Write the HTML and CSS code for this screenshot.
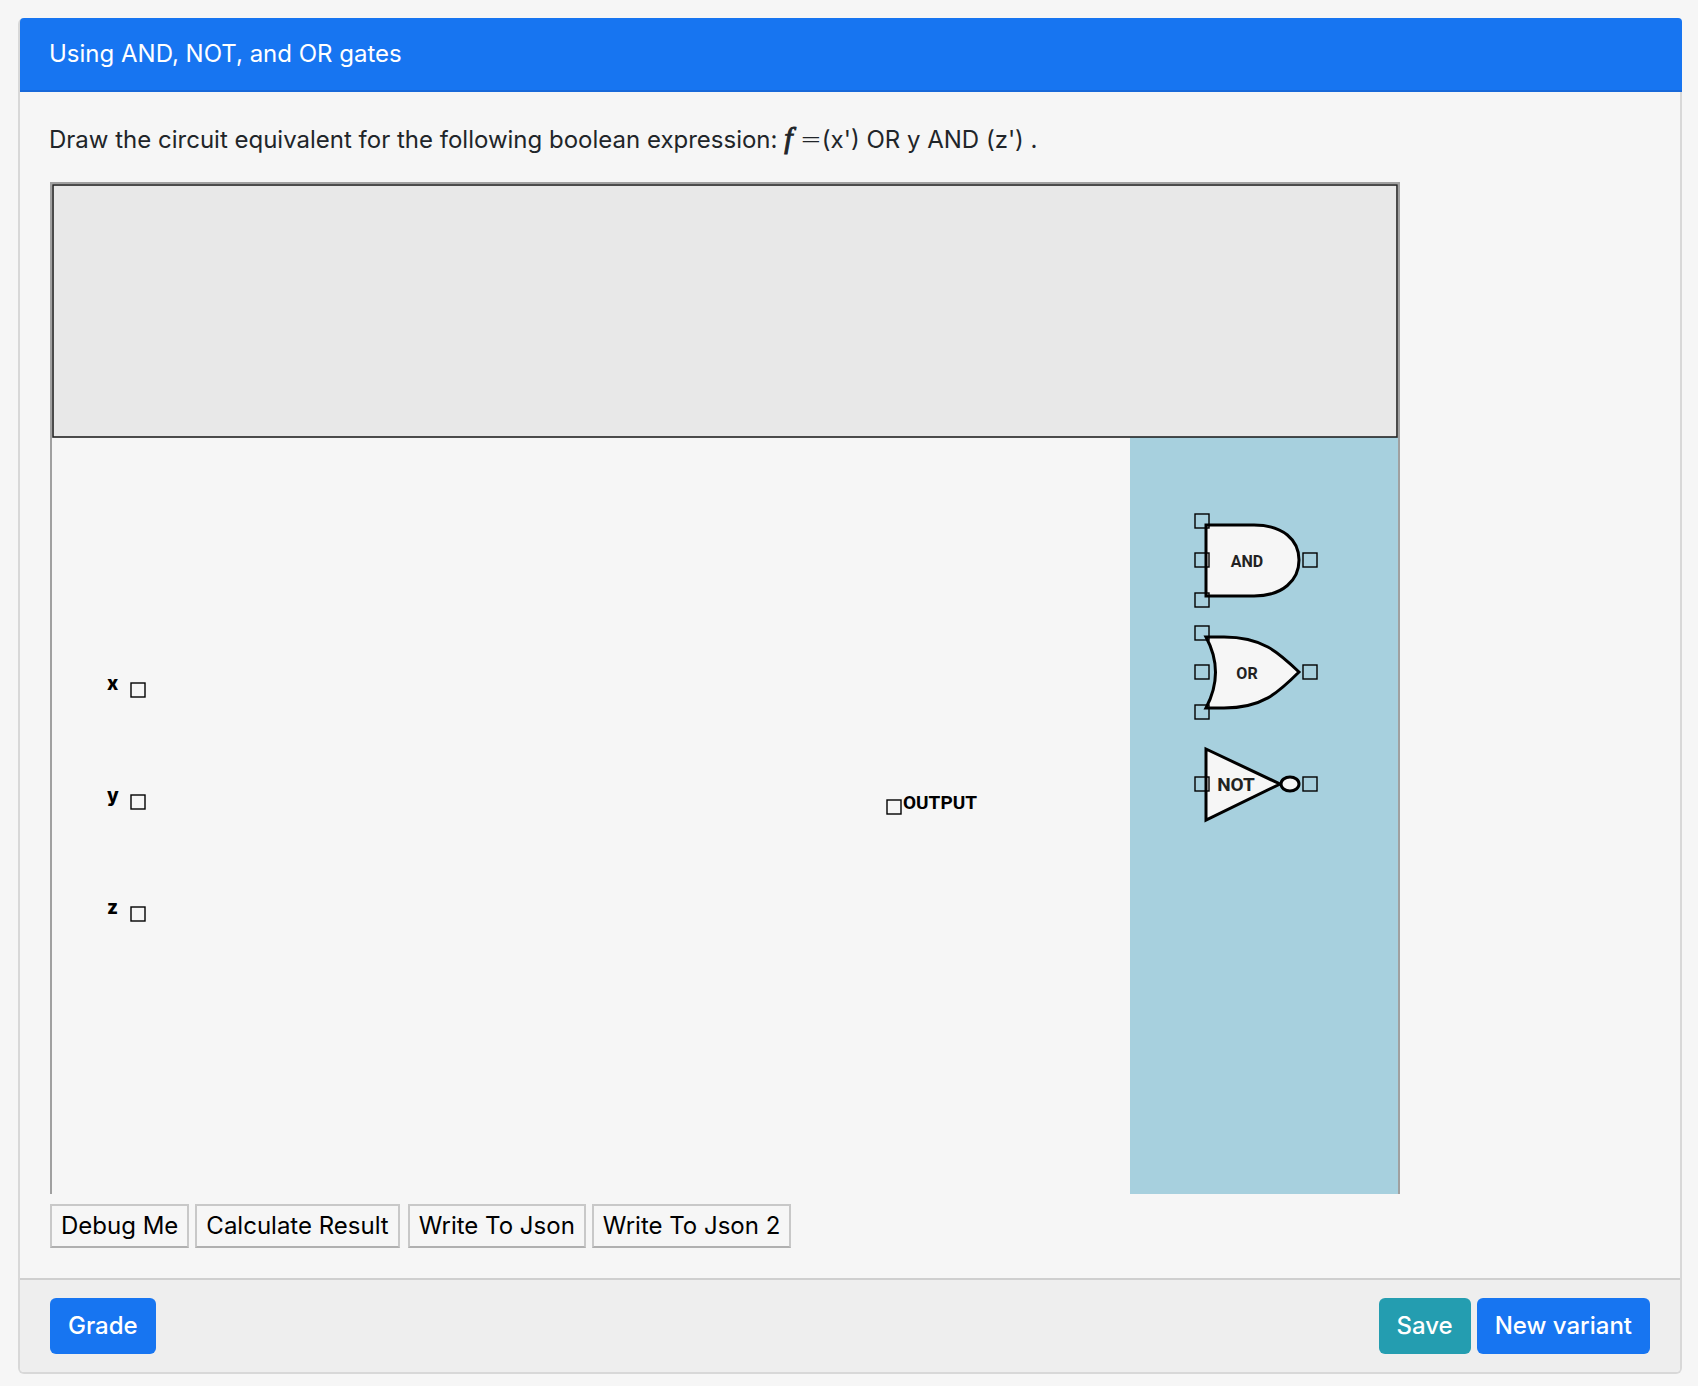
FILE: index.html
```html
<!DOCTYPE html>
<html lang="en">
<head>
<meta charset="utf-8">
<meta name="viewport" content="width=device-width, initial-scale=1">
<title>Using AND, NOT, and OR gates</title>
<link rel="stylesheet" href="styles.css">
</head>
<body>
<main class="card">
  <header class="card-header">Using AND, NOT, and OR gates</header>
  <section class="card-body">
    <p class="prompt">Draw the circuit equivalent for the following boolean expression: <span class="math"><i>f</i> <span class="equals">=</span></span>(x') OR y AND (z') .</p>
    <svg class="circuit" viewBox="0 0 1346 1010" role="img" aria-label="Circuit workspace">
      <rect class="toolbox" x="1078" y="253" width="268" height="757"/>
      <rect class="console" x="1" y="1" width="1344" height="252"/>

      <g class="input-nodes">
        <text x="55" y="506">x</text>
        <rect class="pin" x="79" y="499" width="14" height="14"/>
        <text x="55" y="618">y</text>
        <rect class="pin" x="79" y="611" width="14" height="14"/>
        <text x="55" y="730">z</text>
        <rect class="pin" x="79" y="723" width="14" height="14"/>
      </g>

      <g class="output-node">
        <rect class="pin" x="835" y="616" width="14" height="14"/>
        <text x="851" y="625">OUTPUT</text>
      </g>

      <g transform="translate(1154 376)">
        <path class="gate" d="M0-35H48C77-35 93-20 93 0S77 36 48 36H0Z"/>
        <text class="gate-label" x="41" y="7">AND</text>
        <rect class="pin" x="-11" y="-46" width="14" height="14"/>
        <rect class="pin" x="-11" y="-7" width="14" height="14"/>
        <rect class="pin" x="-11" y="33" width="14" height="14"/>
        <rect class="pin" x="97" y="-7" width="14" height="14"/>
      </g>
      <g transform="translate(1154 488)">
        <path class="gate" d="M0-35H18C56-35 72-20 93 0C72 21 56 36 18 36H0Q19 0 0-35Z"/>
        <text class="gate-label" x="41" y="7">OR</text>
        <rect class="pin" x="-11" y="-46" width="14" height="14"/>
        <rect class="pin" x="-11" y="-7" width="14" height="14"/>
        <rect class="pin" x="-11" y="33" width="14" height="14"/>
        <rect class="pin" x="97" y="-7" width="14" height="14"/>
      </g>
      <g transform="translate(1154 600)">
        <path class="gate" d="M0-35L74 0L0 36Z"/>
        <ellipse class="gate" cx="84" cy="0" rx="9" ry="7"/>
        <text class="gate-label gate-label-wide" x="30" y="7">NOT</text>
        <rect class="pin" x="-11" y="-7" width="14" height="14"/>
        <rect class="pin" x="97" y="-7" width="14" height="14"/>
      </g>
    </svg>
    <div class="tools">
      <div class="tool-pair">
        <button class="tool" type="button">Debug Me</button>
        <button class="tool" type="button">Calculate Result</button>
      </div>
      <div class="tool-pair">
        <button class="tool" type="button">Write To Json</button>
        <button class="tool" type="button">Write To Json 2</button>
      </div>
    </div>
  </section>
  <footer class="card-footer">
    <button class="btn btn-primary" type="button">Grade</button>
    <div class="actions">
      <button class="btn btn-info" type="button">Save</button>
      <button class="btn btn-primary" type="button">New variant</button>
    </div>
  </footer>
</main>
</body>
</html>
```
FILE: styles.css
```css
* {
  box-sizing: border-box;
}

body {
  margin: 0;
  padding: 18px 16px 12px 18px;
  background: #f6f6f6;
  color: #212529;
  font: 24px/36px Inter, "Liberation Sans", sans-serif;
}

button {
  font: inherit;
}

.card {
  border: 2px solid #d8d8d8;
  border-top: 0;
  border-radius: 6px;
}

.card-header {
  margin-right: -2px;
  padding: 18px 29px;
  border-bottom: 2px solid #1869da;
  border-radius: 4px 4px 0 0;
  background: #1775f1;
  color: #fff;
}

.card-body {
  padding: 30px;
}

.prompt {
  margin: 0 0 24px -1px;
}

.math {
  font-family: "Liberation Serif", serif;
  font-size: 30px;
  line-height: 1;
}

.math i {
  -webkit-text-stroke: 1px currentColor;
}

.equals {
  font-family: "DejaVu Sans", sans-serif;
  font-size: 26px;
  font-weight: 200;
}

.circuit {
  display: block;
  width: 1350px;
  max-width: 100%;
  border: 2px solid #a0a0a0;
  border-bottom: 0;
}

.toolbox {
  fill: #a7d0de;
}

.console {
  fill: #e8e8e8;
  stroke: #222;
  stroke-width: 1.6;
}

.pin {
  fill: none;
  stroke: #000;
  stroke-width: 1.4;
}

.gate {
  fill: #f6f6f6;
  stroke: #000;
  stroke-width: 3;
}

.input-nodes text {
  font: 800 19px Inter, sans-serif;
}

.output-node text {
  font: bold 19px Roboto, sans-serif;
}

.gate-label {
  fill: #222;
  font: bold 16px Roboto, sans-serif;
  text-anchor: middle;
}

.gate-label-wide {
  font-size: 19px;
}

.tools,
.actions,
.tool-pair {
  display: flex;
  flex-wrap: wrap;
  gap: 6px;
}

.tools {
  gap: 8px;
  margin-top: 10px;
}

.tool {
  padding: 2px 9px;
  border: 2px solid #c8c8c8;
  border-bottom-color: #b0b0b0;
  background: #f6f6f6;
  color: #000;
}

.card-footer {
  display: flex;
  flex-wrap: wrap;
  justify-content: space-between;
  gap: 6px;
  padding: 18px 30px;
  border-top: 2px solid #cfcfcf;
  border-radius: 0 0 4px 4px;
  background: #eee;
}

.btn {
  padding: 10px 18px;
  border: 0;
  border-radius: 6px;
  color: #fff;
  font-weight: 500;
}

.btn-primary {
  background: #1775f1;
}

.btn-info {
  background: #249db0;
}
```
